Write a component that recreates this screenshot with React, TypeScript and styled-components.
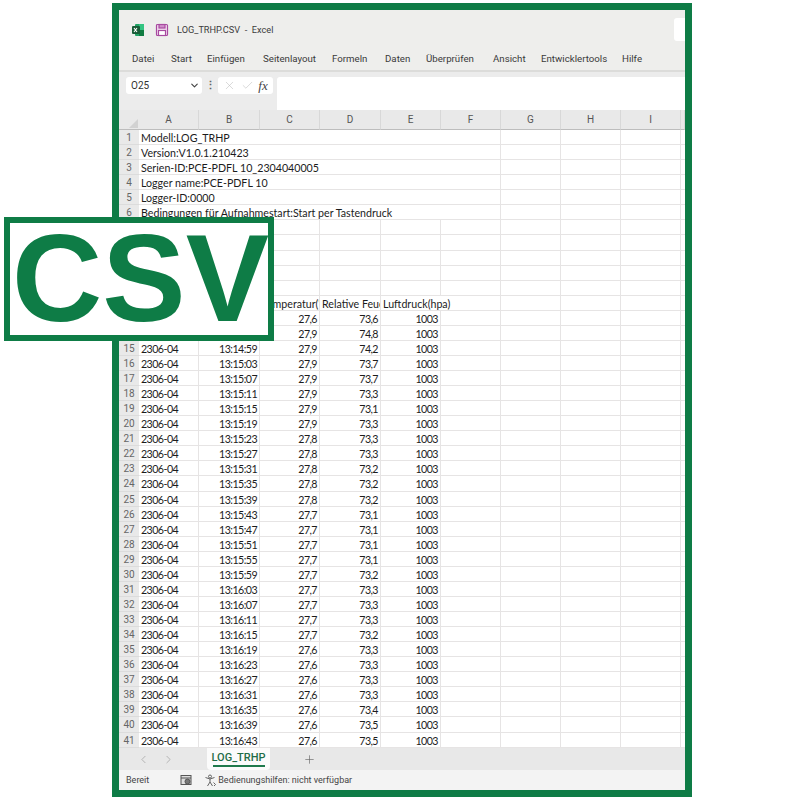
import React from 'react';
import styled, { createGlobalStyle } from 'styled-components';
import { ChevronDown, ChevronLeft, ChevronRight, Plus, X, Check } from 'lucide-react';

const GREEN = '#0e7c46';
const RIBBON_BG = '#eeeeec';
const CELL_LINE = '#e6e4e4';
const ROW_HEIGHT = 15.075;

const GlobalStyle = createGlobalStyle`
  html, body {
    margin: 0;
    padding: 0;
    background: #fff;
  }
`;

const Page = styled.div`
  position: relative;
  width: 800px;
  height: 800px;
  padding: 3px 108px 3px 112px;
  box-sizing: border-box;
  overflow: hidden;
`;

const Frame = styled.div`
  height: 794px;
  box-sizing: border-box;
  border: 7px solid ${GREEN};
  display: flex;
  flex-direction: column;
  background: #fff;
  overflow: hidden;
  font-family: Roboto, "Liberation Sans", sans-serif;
  color: #333;
`;

const TitleBar = styled.div`
  height: 39px;
  flex: none;
  display: flex;
  align-items: center;
  padding-left: 12px;
  background: ${RIBBON_BG};
  position: relative;
`;

const TitleText = styled.span`
  margin-left: 8px;
  font-size: 9.2px;
  color: #3c3c3c;
  white-space: pre;
`;

const SearchStub = styled.div`
  position: absolute;
  right: 0;
  top: 8px;
  width: 11px;
  height: 23px;
  background: #fff;
  border-radius: 3px 0 0 3px;
`;

const Menu = styled.div`
  height: 23px;
  flex: none;
  display: flex;
  align-items: flex-start;
  background: ${RIBBON_BG};
  border-bottom: 2px solid #dcdcda;
  padding: 2px 0 0 13px;
  box-sizing: border-box;
`;

const MenuItem = styled.span<{ $at: number }>`
  flex: none;
  width: ${(p) => p.$at}px;
  font-size: 9.7px;
  line-height: 15px;
  color: #3a3a3a;
  white-space: nowrap;
`;

const FormulaRow = styled.div`
  height: 38px;
  flex: none;
  display: flex;
  align-items: flex-start;
  background: #ececec;
  padding: 5px 0 0 7px;
  box-sizing: border-box;
`;

const NameBox = styled.div`
  width: 76px;
  height: 17px;
  background: #fff;
  border-radius: 3px;
  display: flex;
  align-items: center;
  justify-content: space-between;
  padding: 0 2px 0 5px;
  box-sizing: border-box;
  font-size: 10px;
  color: #333;
`;

const Dots = styled.div`
  width: 16px;
  height: 17px;
  display: flex;
  align-items: center;
  justify-content: center;
  font-size: 11px;
  font-weight: 700;
  color: #666;
`;

const ButtonGroup = styled.div`
  width: 55px;
  height: 17px;
  background: #fff;
  border-radius: 3px;
  display: flex;
  align-items: center;
  justify-content: space-around;
  padding: 0 3px;
  box-sizing: border-box;
`;

const Fx = styled.span`
  font-family: "Liberation Serif", serif;
  font-style: italic;
  font-size: 13px;
  color: #444;
`;

const FormulaInput = styled.div`
  flex: 1;
  height: 33px;
  margin-left: 4px;
  background: #fff;
  border-radius: 3px 0 0 0;
`;

const Sheet = styled.div`
  flex: none;
  height: 638px;
  display: grid;
  grid-template-columns: 20px 60px 61px 60px 61px 60px 60px 60px 60px 60px 4px;
  grid-template-rows: 20px repeat(41, ${ROW_HEIGHT}px);
  overflow: hidden;
  font-family: Lato, "Liberation Sans", sans-serif;
  background: #fff;
`;

const Corner = styled.div`
  background: #e9e9e9;
  border-bottom: 1px solid #bdbdbd;
  position: relative;
  &::after {
    content: '';
    position: absolute;
    right: 1px;
    bottom: 1px;
    border-left: 9px solid transparent;
    border-bottom: 9px solid #d2d2d2;
  }
`;

const ColHead = styled.div`
  background: #e9e9e9;
  border-bottom: 1px solid #bdbdbd;
  border-right: 1px solid #d8d8d8;
  font-size: 10px;
  color: #555;
  display: flex;
  align-items: center;
  justify-content: center;
  font-family: Roboto, sans-serif;
`;

const RowHead = styled.div`
  background: #e9e9e9;
  border-bottom: 1px solid #dcdcdc;
  font-size: 10px;
  color: #666;
  text-align: center;
  line-height: 14px;
  padding-top: 1px;
  box-sizing: border-box;
  font-family: Roboto, sans-serif;
  overflow: hidden;
`;

const Cell = styled.div<{ $right?: boolean; $spill?: boolean; $num?: boolean }>`
  border-bottom: 1px solid ${CELL_LINE};
  border-right: ${(p) => (p.$spill ? 'none' : `1px solid ${CELL_LINE}`)};
  font-size: 10.65px;
  letter-spacing: ${(p) => (p.$num ? '-0.55px' : 'normal')};
  line-height: 14px;
  color: #1c1c1c;
  padding: 1px 2px 0;
  box-sizing: border-box;
  text-align: ${(p) => (p.$right ? 'right' : 'left')};
  white-space: nowrap;
  overflow: ${(p) => (p.$spill ? 'visible' : 'hidden')};
  min-width: 0;
`;

const Tabs = styled.div`
  height: 22px;
  flex: none;
  display: flex;
  align-items: flex-start;
  background: #e8e8e8;
  color: #999;
`;

const NavButtons = styled.div`
  width: 88px;
  height: 22px;
  display: flex;
  align-items: center;
  gap: 12px;
  padding-left: 18px;
  box-sizing: border-box;
`;

const SheetTab = styled.div`
  width: 63px;
  height: 22px;
  background: #fbfbfb;
  border-radius: 0 0 4px 4px;
  display: flex;
  flex-direction: column;
  align-items: center;
  font-size: 11px;
  font-weight: 500;
  line-height: 19px;
  color: #1f6d47;
  box-sizing: border-box;
`;

const TabLine = styled.div`
  width: 52px;
  height: 2px;
  margin-top: -2px;
  background: #1f7a4c;
`;

const AddSheet = styled.div`
  margin-left: 33px;
  height: 22px;
  display: flex;
  align-items: center;
  color: #666;
`;

const StatusBar = styled.div`
  flex: 1;
  display: flex;
  align-items: center;
  background: #f3f3f3;
  padding-left: 7px;
  font-size: 9px;
  color: #444;
`;

const StatusText = styled.span<{ $left?: number }>`
  margin-left: ${(p) => p.$left ?? 0}px;
  white-space: nowrap;
`;

const Badge = styled.div`
  position: absolute;
  left: 4px;
  top: 217px;
  width: 270px;
  height: 124px;
  box-sizing: border-box;
  border: 6px solid ${GREEN};
  background: #fff;
  color: ${GREEN};
  font-family: "Liberation Sans", Arial, sans-serif;
  font-weight: 700;
  font-size: 125px;
  line-height: 110px;
  padding-left: 2px;
  white-space: nowrap;
  overflow: hidden;
`;

const ExcelIcon = () => (
  <svg width="14" height="14" viewBox="0 0 14 14">
    <rect x="4" y="1" width="9" height="12" rx="1" fill="#21a366" />
    <rect x="8" y="1" width="5" height="6" fill="#33c481" />
    <rect x="8" y="7" width="5" height="6" fill="#107c41" />
    <rect x="1" y="3" width="8" height="8" rx="1" fill="#185c37" />
    <path d="M3 5l3 4M6 5L3 9" stroke="#fff" strokeWidth="1.1" />
  </svg>
);

const SaveIcon = () => (
  <svg width="14" height="14" viewBox="0 0 14 14" style={{ marginLeft: 10 }} fill="none" stroke="#a84aa0" strokeWidth="1.2">
    <rect x="1.5" y="1.5" width="11" height="11" rx="1" fill="#f3dff1" />
    <rect x="4" y="1.5" width="6" height="3.5" fill="#cf8fca" />
    <rect x="3.5" y="7.5" width="7" height="5" fill="#fff" />
  </svg>
);

const MacroIcon = () => (
  <svg width="12" height="12" viewBox="0 0 12 12" style={{ marginLeft: 31 }} fill="none" stroke="#555">
    <rect x="1" y="1.5" width="10" height="9" fill="#ddd" />
    <path d="M1 4h10" />
    <circle cx="7.5" cy="7.5" r="2.5" fill="#777" />
  </svg>
);

const AccessIcon = () => (
  <svg width="13" height="13" viewBox="0 0 13 13" style={{ marginLeft: 12 }} fill="none" stroke="#555" strokeWidth="0.9">
    <circle cx="6" cy="2.5" r="1.5" />
    <path d="M1.5 3.5L6 5l4.5-1.5M6 5v3L3.5 12M6 8l2.5 4M9.5 8.5l2 2-1.5 1.5" />
  </svg>
);

// label, advance to the next label
const MENU: [string, number][] = [
  ['Datei', 39],
  ['Start', 36],
  ['Einfügen', 56],
  ['Seitenlayout', 69],
  ['Formeln', 53],
  ['Daten', 41],
  ['Überprüfen', 67],
  ['Ansicht', 48],
  ['Entwicklertools', 81],
  ['Hilfe', 30],
];

const COLUMNS = ['A', 'B', 'C', 'D', 'E', 'F', 'G', 'H', 'I'];

const NOTES: Record<number, string> = {
  1: 'Modell:LOG_TRHP',
  2: 'Version:V1.0.1.210423',
  3: 'Serien-ID:PCE-PDFL 10_2304040005',
  4: 'Logger name:PCE-PDFL 10',
  5: 'Logger-ID:0000',
  6: 'Bedingungen für Aufnahmestart:Start per Tastendruck',
};

// row number -> time, temperature, humidity
const DATA: Record<number, [string, string, string]> = {
  13: ['13:14:51', '27,6', '73,6'],
  14: ['13:14:55', '27,9', '74,8'],
  15: ['13:14:59', '27,9', '74,2'],
  16: ['13:15:03', '27,9', '73,7'],
  17: ['13:15:07', '27,9', '73,7'],
  18: ['13:15:11', '27,9', '73,3'],
  19: ['13:15:15', '27,9', '73,1'],
  20: ['13:15:19', '27,9', '73,3'],
  21: ['13:15:23', '27,8', '73,3'],
  22: ['13:15:27', '27,8', '73,3'],
  23: ['13:15:31', '27,8', '73,2'],
  24: ['13:15:35', '27,8', '73,2'],
  25: ['13:15:39', '27,8', '73,2'],
  26: ['13:15:43', '27,7', '73,1'],
  27: ['13:15:47', '27,7', '73,1'],
  28: ['13:15:51', '27,7', '73,1'],
  29: ['13:15:55', '27,7', '73,1'],
  30: ['13:15:59', '27,7', '73,2'],
  31: ['13:16:03', '27,7', '73,3'],
  32: ['13:16:07', '27,7', '73,3'],
  33: ['13:16:11', '27,7', '73,3'],
  34: ['13:16:15', '27,7', '73,2'],
  35: ['13:16:19', '27,6', '73,3'],
  36: ['13:16:23', '27,6', '73,3'],
  37: ['13:16:27', '27,6', '73,3'],
  38: ['13:16:31', '27,6', '73,3'],
  39: ['13:16:35', '27,6', '73,4'],
  40: ['13:16:39', '27,6', '73,5'],
  41: ['13:16:43', '27,6', '73,5'],
};

const rowCells = (row: number) => {
  const data = DATA[row];
  if (data) {
    return [
      <Cell key="a" $num>2306-04</Cell>,
      <Cell key="b" $num $right>{data[0]}</Cell>,
      <Cell key="c" $num $right>{data[1]}</Cell>,
      <Cell key="d" $num $right>{data[2]}</Cell>,
      <Cell key="e" $num $right>1003</Cell>,
    ];
  }
  if (row === 12) {
    return [
      <Cell key="a">Datum</Cell>,
      <Cell key="b" $right>Zeit</Cell>,
      <Cell key="c">Temperatur(°C)</Cell>,
      <Cell key="d">Relative Feuchte</Cell>,
      <Cell key="e" $spill>Luftdruck(hpa)</Cell>,
    ];
  }
  return [
    <Cell key="a" $spill={!!NOTES[row]}>{NOTES[row]}</Cell>,
    ...['b', 'c', 'd', 'e'].map((k) => <Cell key={k} $spill={!!NOTES[row]} />),
  ];
};

const App: React.FC = () => {
  const rows = Array.from({ length: 41 }, (_, i) => i + 1);

  return (
    <>
      <GlobalStyle />
      <Page>
        <Frame>
          <TitleBar>
            <ExcelIcon />
            <SaveIcon />
            <TitleText>LOG_TRHP.CSV  -  Excel</TitleText>
            <SearchStub />
          </TitleBar>
          <Menu>
            {MENU.map(([label, at]) => (
              <MenuItem key={label} $at={at}>{label}</MenuItem>
            ))}
          </Menu>
          <FormulaRow>
            <NameBox>
              O25
              <ChevronDown size={11} strokeWidth={2.5} color="#444" />
            </NameBox>
            <Dots>⋮</Dots>
            <ButtonGroup>
              <X size={13} strokeWidth={1} color="#bbb" />
              <Check size={13} strokeWidth={1} color="#bbb" />
              <Fx>fx</Fx>
            </ButtonGroup>
            <FormulaInput />
          </FormulaRow>
          <Sheet>
            <Corner />
            {COLUMNS.map((c) => (
              <ColHead key={c}>{c}</ColHead>
            ))}
            <ColHead />
            {rows.map((row) => (
              <React.Fragment key={row}>
                <RowHead>{row}</RowHead>
                {rowCells(row)}
                {['f', 'g', 'h', 'i', 'j'].map((k) => (
                  <Cell key={k} />
                ))}
              </React.Fragment>
            ))}
          </Sheet>
          <Tabs>
            <NavButtons>
              <ChevronLeft size={13} strokeWidth={1.2} />
              <ChevronRight size={13} strokeWidth={1.2} />
            </NavButtons>
            <SheetTab>
              LOG_TRHP
              <TabLine />
            </SheetTab>
            <AddSheet>
              <Plus size={13} strokeWidth={1.2} />
            </AddSheet>
          </Tabs>
          <StatusBar>
            <StatusText>Bereit</StatusText>
            <MacroIcon />
            <AccessIcon />
            <StatusText $left={1}>Bedienungshilfen: nicht verfügbar</StatusText>
          </StatusBar>
        </Frame>
        <Badge>CSV</Badge>
      </Page>
    </>
  );
};

export default App;
